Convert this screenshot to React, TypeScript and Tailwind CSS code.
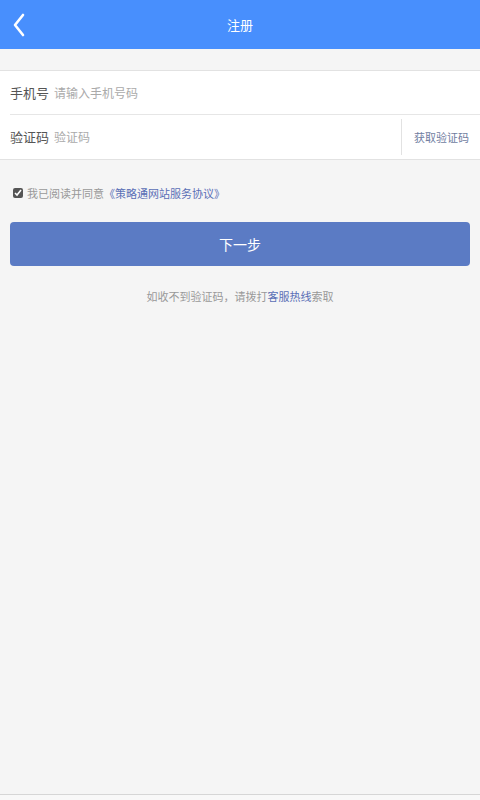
import React, { useState } from "react";

const font = { fontFamily: '"Noto Sans CJK SC", "Liberation Sans", sans-serif' };

const App: React.FC = () => {
  const [agree, setAgree] = useState(true);

  return (
    <div className="w-[480px] h-[800px] bg-[#f5f5f5] flex flex-col" style={font}>
      {/* Header */}
      <div className="h-[49px] bg-[#488ffd] flex items-center relative shrink-0">
        <button className="w-[36px] h-full flex items-center justify-center pl-[2px]">
          <svg width="14" height="24" viewBox="0 0 14 24" fill="none">
            <path d="M11 2 L3 12 L11 22" stroke="#fff" strokeWidth="2.6" strokeLinecap="round" strokeLinejoin="round" />
          </svg>
        </button>
        <div className="absolute inset-0 flex items-center justify-center text-white text-[13px] pointer-events-none">
          注册
        </div>
      </div>
      <div className="h-[21px] shrink-0" />

      {/* Form */}
      <div className="bg-white border-y border-[#e2e2e2]">
        <div className="ml-[10px] h-[44px] flex items-center border-b border-[#e6e6e6]">
          <span className="text-[13px] text-[#555] w-[44px] whitespace-nowrap">手机号</span>
          <input
            placeholder="请输入手机号码"
            className="flex-1 text-[12px] outline-none placeholder:text-[#aaa] bg-transparent"
          />
        </div>
        <div className="h-[44px] flex items-center pl-[10px]">
          <span className="text-[13px] text-[#555] w-[44px] whitespace-nowrap">验证码</span>
          <input
            placeholder="验证码"
            className="flex-1 min-w-0 text-[12px] outline-none placeholder:text-[#aaa] bg-transparent"
          />
          <div className="h-[36px] border-l border-[#e2e2e2] flex items-center pl-[12px] pr-[11px]">
            <span className="text-[11px] text-[#6f7d9f] whitespace-nowrap">获取验证码</span>
          </div>
        </div>
      </div>

      {/* Agreement */}
      <label className="flex items-center mt-[24px] ml-[13px] h-[18px]">
        <input
          type="checkbox"
          checked={agree}
          onChange={() => setAgree(!agree)}
          className="w-[10px] h-[10px] mr-[4px] accent-[#555]"
        />
        <span className="text-[11px] text-[#999]">我已阅读并同意</span>
        <span className="text-[11px] text-[#5a6fb6]">《策略通网站服务协议》</span>
      </label>

      {/* Button */}
      <button className="mx-[10px] mt-[20px] h-[44px] rounded-[4px] bg-[#5b7bc4] text-white text-[14px]">
        下一步
      </button>

      <p className="text-center text-[11px] text-[#999] mt-[22px]">
        如收不到验证码，请拨打<span className="text-[#5a6fb6]">客服热线</span>索取
      </p>

      <div className="flex-1" />
      <div className="h-[6px] border-t border-[#d6d6d6] bg-[#f8f8f8] shrink-0" />
    </div>
  );
};

export default App;
